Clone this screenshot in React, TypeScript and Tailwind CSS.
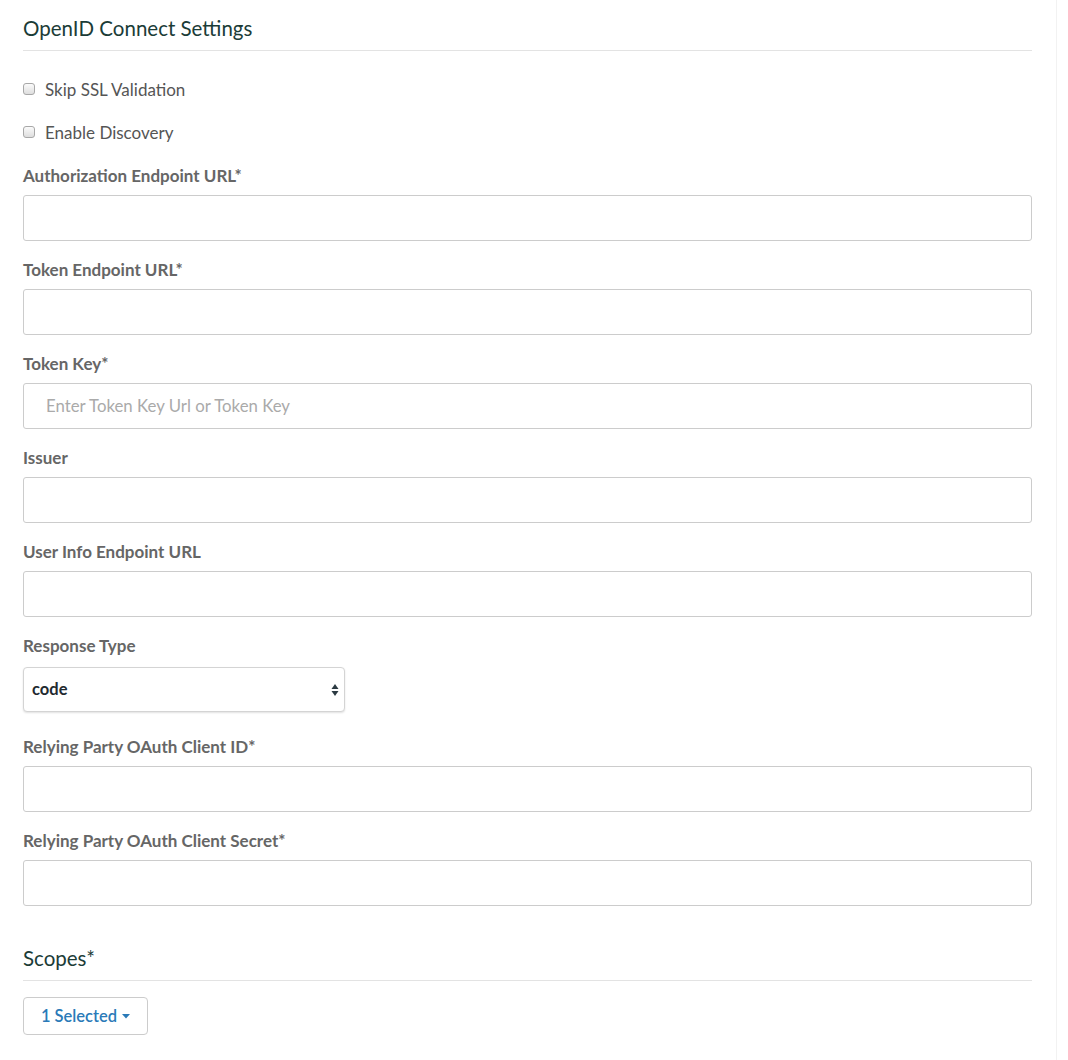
import React from "react";

const font = { fontFamily: "Lato, 'Open Sans', sans-serif" };

function Checkbox({ label, className }: { label: string; className?: string }) {
  return (
    <label className={"flex items-center h-[20px] " + (className ?? "")}>
      <span className="block w-[12px] h-[12px] rounded-[3px] border border-[#a8a8a8] bg-gradient-to-b from-[#fbfbfb] to-[#dedede] mr-[10px] -mt-[3px]" />
      <span className="text-[17px] text-[#555] leading-[20px]">{label}</span>
    </label>
  );
}

function Field({ label, placeholder }: { label: string; placeholder?: string }) {
  return (
    <div className="mb-[19px]">
      <div className="text-[17px] font-bold text-[#666] leading-[20px] mb-[9px]">{label}</div>
      <div className="h-[46px] w-[1009px] border border-[#ccc] rounded-[3px] bg-white flex items-center pl-[22px]">
        {placeholder ? <span className="text-[16.8px] text-[#aaa]">{placeholder}</span> : null}
      </div>
    </div>
  );
}

export default function App() {
  return (
    <div style={font} className="bg-white w-[1057px] min-h-[1060px] border-r border-[#f2f2f2]">
      <div className="pl-[23px] pt-[15px] w-[1032px]">
        <h2 className="text-[20.5px] text-[#1b3c37] leading-[26px]">OpenID Connect Settings</h2>
        <div className="h-px bg-[#e3e3e3] mt-[9px]" />
        <Checkbox label="Skip SSL Validation" className="mt-[29px]" />
        <Checkbox label="Enable Discovery" className="mt-[23px]" />
        <div className="mt-[23px]">
          <Field label="Authorization Endpoint URL*" />
          <Field label="Token Endpoint URL*" />
          <Field label="Token Key*" placeholder="Enter Token Key Url or Token Key" />
          <Field label="Issuer" />
          <Field label="User Info Endpoint URL" />
          <div className="mb-[25px]">
            <div className="text-[17px] font-bold text-[#666] leading-[20px] mb-[11px]">Response Type</div>
            <div className="h-[45px] w-[322px] border border-[#d4d4d4] rounded-[4px] bg-white shadow-[0_1px_2px_rgba(0,0,0,0.12)] flex items-center justify-between pl-[8px] pr-[5px]">
              <span className="text-[16.5px] font-bold text-[#1f2a30]">code</span>
              <svg width="8" height="14" viewBox="0 0 8 14">
                <path d="M4 1 L7.5 6 L0.5 6 Z" fill="#2b3a42" />
                <path d="M4 13 L7.5 8 L0.5 8 Z" fill="#2b3a42" />
              </svg>
            </div>
          </div>
          <Field label="Relying Party OAuth Client ID*" />
          <Field label="Relying Party OAuth Client Secret*" />
        </div>
        <h2 className="text-[20.5px] text-[#1b3c37] leading-[26px] mt-[39px]">Scopes*</h2>
        <div className="h-px bg-[#e3e3e3] mt-[9px]" />
        <button className="mt-[16px] h-[38px] w-[125px] border border-[#ccc] rounded-[4px] bg-white flex items-center justify-center gap-[5px] text-[16.5px] font-semibold text-[#2a7ab8]">
          <span>1 Selected</span>
          <svg width="8" height="5" viewBox="0 0 8 5">
            <path d="M0 0 L8 0 L4 4.5 Z" fill="#2a7ab8" />
          </svg>
        </button>
      </div>
    </div>
  );
}
